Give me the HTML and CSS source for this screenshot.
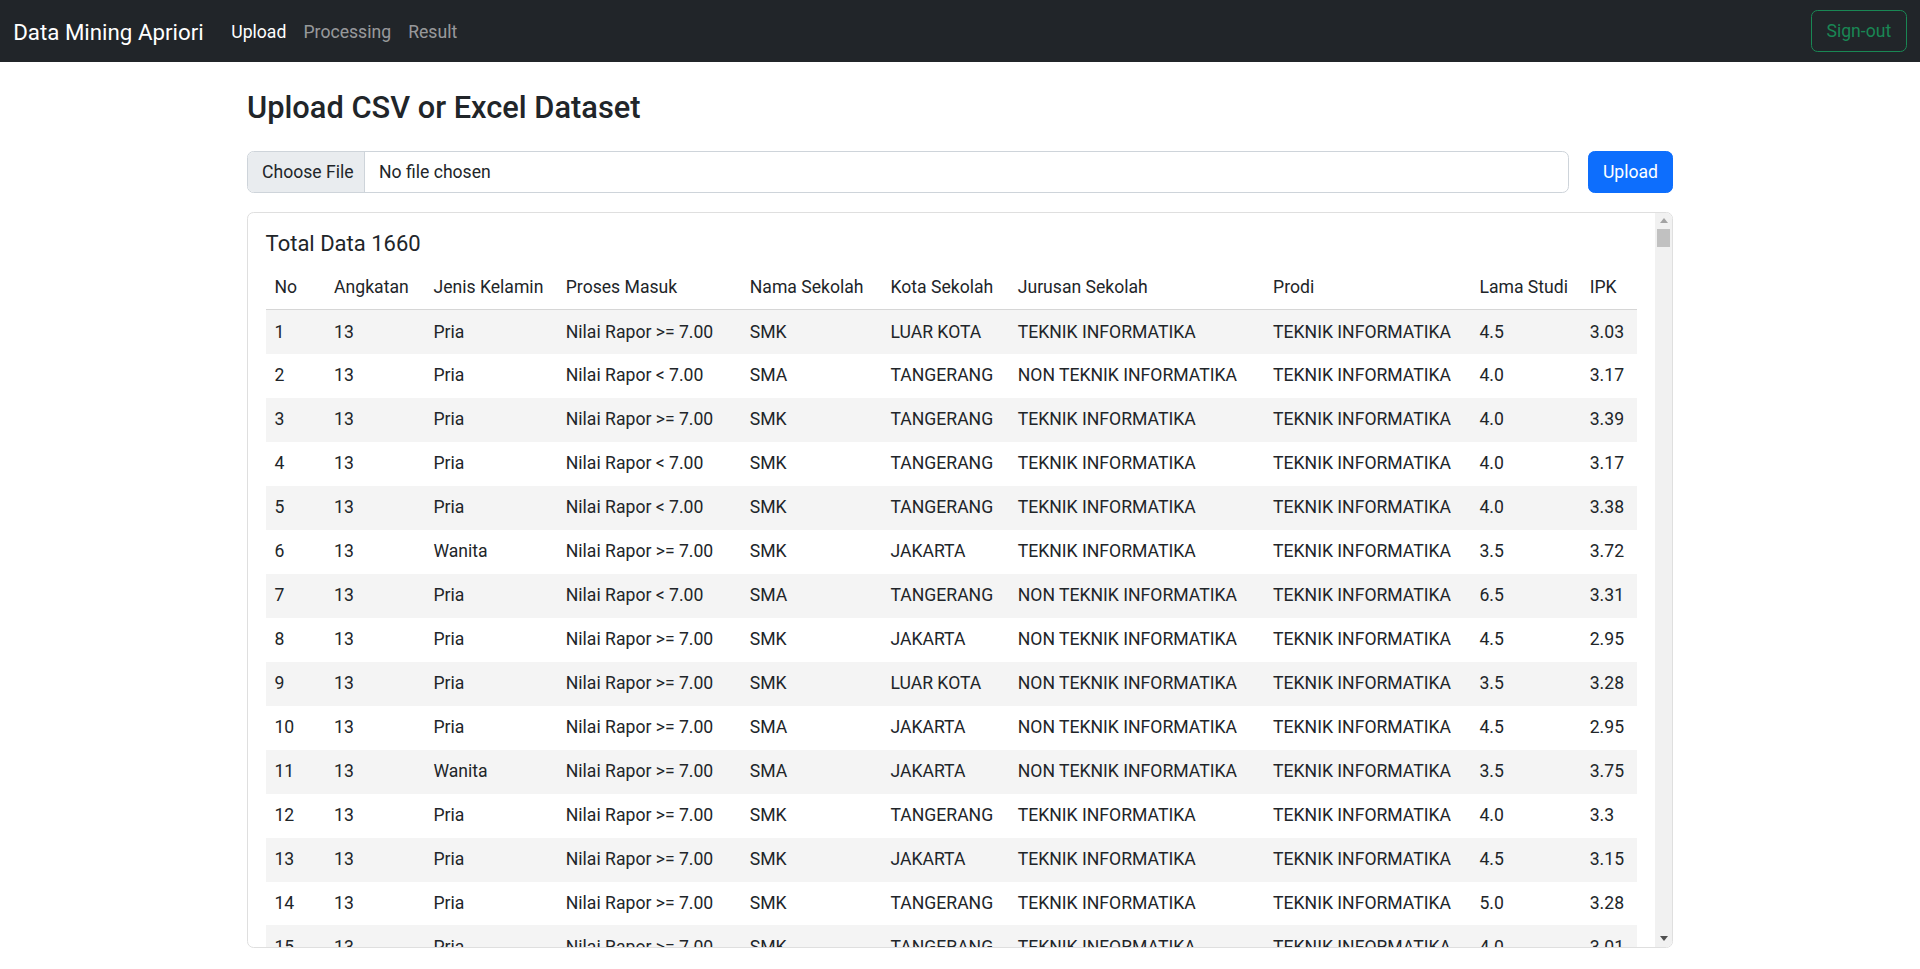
FILE: index.html
```html
<!DOCTYPE html>
<html lang="en">
<head>
<meta charset="utf-8">
<title>Data Mining Apriori</title>
<link rel="stylesheet" href="styles.css">
</head>
<body>
<nav class="navbar">
  <div class="nav-left">
    <a class="brand" href="#">Data Mining Apriori</a>
    <ul class="nav-links">
      <li><a class="nav-link active" href="#">Upload</a></li>
      <li><a class="nav-link" href="#">Processing</a></li>
      <li><a class="nav-link" href="#">Result</a></li>
    </ul>
  </div>
  <button class="btn-signout" type="button">Sign-out</button>
</nav>

<main class="container">
  <h2 class="page-title">Upload CSV or Excel Dataset</h2>
  <form class="upload-form">
    <label class="file-input">
      <input type="file" class="file-hidden" accept=".csv,.xlsx,.xls">
      <span class="file-btn">Choose File</span>
      <span class="file-name">No file chosen</span>
    </label>
    <button class="btn-upload" type="button">Upload</button>
  </form>

  <section class="card">
    <div class="card-scroll">
      <div class="card-body">
        <h5 class="card-title">Total Data 1660</h5>
        <table class="data-table">
          <colgroup>
            <col class="c-no"><col class="c-angkatan"><col class="c-jk"><col class="c-proses"><col class="c-nama">
            <col class="c-kota"><col class="c-jurusan"><col class="c-prodi"><col class="c-lama"><col class="c-ipk">
          </colgroup>
          <thead>
            <tr><th>No</th><th>Angkatan</th><th>Jenis Kelamin</th><th>Proses Masuk</th><th>Nama Sekolah</th><th>Kota Sekolah</th><th>Jurusan Sekolah</th><th>Prodi</th><th>Lama Studi</th><th>IPK</th></tr>
          </thead>
          <tbody>
            <tr><td>1</td><td>13</td><td>Pria</td><td>Nilai Rapor &gt;= 7.00</td><td>SMK</td><td>LUAR KOTA</td><td>TEKNIK INFORMATIKA</td><td>TEKNIK INFORMATIKA</td><td>4.5</td><td>3.03</td></tr>
            <tr><td>2</td><td>13</td><td>Pria</td><td>Nilai Rapor &lt; 7.00</td><td>SMA</td><td>TANGERANG</td><td>NON TEKNIK INFORMATIKA</td><td>TEKNIK INFORMATIKA</td><td>4.0</td><td>3.17</td></tr>
            <tr><td>3</td><td>13</td><td>Pria</td><td>Nilai Rapor &gt;= 7.00</td><td>SMK</td><td>TANGERANG</td><td>TEKNIK INFORMATIKA</td><td>TEKNIK INFORMATIKA</td><td>4.0</td><td>3.39</td></tr>
            <tr><td>4</td><td>13</td><td>Pria</td><td>Nilai Rapor &lt; 7.00</td><td>SMK</td><td>TANGERANG</td><td>TEKNIK INFORMATIKA</td><td>TEKNIK INFORMATIKA</td><td>4.0</td><td>3.17</td></tr>
            <tr><td>5</td><td>13</td><td>Pria</td><td>Nilai Rapor &lt; 7.00</td><td>SMK</td><td>TANGERANG</td><td>TEKNIK INFORMATIKA</td><td>TEKNIK INFORMATIKA</td><td>4.0</td><td>3.38</td></tr>
            <tr><td>6</td><td>13</td><td>Wanita</td><td>Nilai Rapor &gt;= 7.00</td><td>SMK</td><td>JAKARTA</td><td>TEKNIK INFORMATIKA</td><td>TEKNIK INFORMATIKA</td><td>3.5</td><td>3.72</td></tr>
            <tr><td>7</td><td>13</td><td>Pria</td><td>Nilai Rapor &lt; 7.00</td><td>SMA</td><td>TANGERANG</td><td>NON TEKNIK INFORMATIKA</td><td>TEKNIK INFORMATIKA</td><td>6.5</td><td>3.31</td></tr>
            <tr><td>8</td><td>13</td><td>Pria</td><td>Nilai Rapor &gt;= 7.00</td><td>SMK</td><td>JAKARTA</td><td>NON TEKNIK INFORMATIKA</td><td>TEKNIK INFORMATIKA</td><td>4.5</td><td>2.95</td></tr>
            <tr><td>9</td><td>13</td><td>Pria</td><td>Nilai Rapor &gt;= 7.00</td><td>SMK</td><td>LUAR KOTA</td><td>NON TEKNIK INFORMATIKA</td><td>TEKNIK INFORMATIKA</td><td>3.5</td><td>3.28</td></tr>
            <tr><td>10</td><td>13</td><td>Pria</td><td>Nilai Rapor &gt;= 7.00</td><td>SMA</td><td>JAKARTA</td><td>NON TEKNIK INFORMATIKA</td><td>TEKNIK INFORMATIKA</td><td>4.5</td><td>2.95</td></tr>
            <tr><td>11</td><td>13</td><td>Wanita</td><td>Nilai Rapor &gt;= 7.00</td><td>SMA</td><td>JAKARTA</td><td>NON TEKNIK INFORMATIKA</td><td>TEKNIK INFORMATIKA</td><td>3.5</td><td>3.75</td></tr>
            <tr><td>12</td><td>13</td><td>Pria</td><td>Nilai Rapor &gt;= 7.00</td><td>SMK</td><td>TANGERANG</td><td>TEKNIK INFORMATIKA</td><td>TEKNIK INFORMATIKA</td><td>4.0</td><td>3.3</td></tr>
            <tr><td>13</td><td>13</td><td>Pria</td><td>Nilai Rapor &gt;= 7.00</td><td>SMK</td><td>JAKARTA</td><td>TEKNIK INFORMATIKA</td><td>TEKNIK INFORMATIKA</td><td>4.5</td><td>3.15</td></tr>
            <tr><td>14</td><td>13</td><td>Pria</td><td>Nilai Rapor &gt;= 7.00</td><td>SMK</td><td>TANGERANG</td><td>TEKNIK INFORMATIKA</td><td>TEKNIK INFORMATIKA</td><td>5.0</td><td>3.28</td></tr>
            <tr><td>15</td><td>13</td><td>Pria</td><td>Nilai Rapor &gt;= 7.00</td><td>SMK</td><td>TANGERANG</td><td>TEKNIK INFORMATIKA</td><td>TEKNIK INFORMATIKA</td><td>4.0</td><td>3.01</td></tr>
          </tbody>
        </table>
      </div>
    </div>
    <div class="scrollbar" aria-hidden="true">
      <span class="sb-btn"><span class="sb-arrow-up"></span></span>
      <span class="sb-thumb"></span>
      <span class="sb-track"></span>
      <span class="sb-btn"><span class="sb-arrow-down"></span></span>
    </div>
  </section>
</main>
</body>
</html>
```

FILE: styles.css
```css
* { box-sizing: border-box; }

html, body {
  margin: 0;
  padding: 0;
}

body {
  font-family: Roboto, "Noto Sans", "Liberation Sans", sans-serif;
  font-size: 17.6px;
  line-height: 1.5;
  color: #212529;
  background: #fff;
}

/* ---------- navbar ---------- */
.navbar {
  height: 62px;
  background: #212529;
  display: flex;
  align-items: center;
  justify-content: space-between;
  padding: 0 13.2px;
}

.nav-left {
  display: flex;
  align-items: center;
  padding-top: 3px;
}

.brand {
  font-size: 22.3px;
  line-height: 1.5;
  color: #fff;
  text-decoration: none;
  margin-right: 19px;
}

.nav-links {
  list-style: none;
  margin: 0;
  padding: 0;
  display: flex;
}

.nav-link {
  display: block;
  padding: 8.8px 8.6px;
  color: rgba(255, 255, 255, 0.55);
  text-decoration: none;
}

.nav-link.active { color: #fff; }

.btn-signout {
  font-family: inherit;
  font-size: 17.6px;
  line-height: 1.5;
  height: 42px;
  width: 96px;
  padding: 0;
  color: #198754;
  background: transparent;
  border: 1.1px solid #198754;
  border-radius: 6.6px;
}

/* ---------- content ---------- */
.container {
  max-width: 1426px;
  margin: 0 auto;
}

.page-title {
  font-size: 30.8px;
  font-weight: 500;
  line-height: 1.2;
  margin: 27.6px 0 24.4px;
}

.upload-form {
  display: flex;
  gap: 19px;
  margin-bottom: 19px;
}

.file-input {
  flex: 1;
  height: 42px;
  display: flex;
  align-items: stretch;
  border: 1.1px solid #ced4da;
  border-radius: 6.6px;
  overflow: hidden;
  cursor: pointer;
}

.file-hidden { display: none; }

.file-btn {
  flex: none;
  display: flex;
  align-items: center;
  width: 117px;
  padding: 0 0 0 14px;
  white-space: nowrap;
  background: #e9ecef;
  border-right: 1.1px solid #ced4da;
}

.file-name {
  display: flex;
  align-items: center;
  padding: 0 14px;
  white-space: nowrap;
}

.btn-upload {
  font-family: inherit;
  font-size: 17.6px;
  height: 42px;
  width: 85px;
  padding: 0;
  color: #fff;
  background: #0d6efd;
  border: 1.1px solid #0d6efd;
  border-radius: 6.6px;
}

/* ---------- card / table ---------- */
.card {
  height: 736px;
  display: flex;
  border: 1px solid #dfdfdf;
  border-radius: 6.6px;
  overflow: hidden;
}

.card-scroll {
  flex: 1;
  min-width: 0;
  overflow-y: auto;
  scrollbar-width: none;
}

.card-scroll::-webkit-scrollbar { display: none; }

.scrollbar {
  flex: none;
  width: 17px;
  display: flex;
  flex-direction: column;
  background: #f1f1f1;
}

.sb-btn {
  height: 16px;
  display: flex;
  align-items: center;
  justify-content: center;
}

.sb-arrow-up {
  width: 0;
  height: 0;
  border-left: 4.5px solid transparent;
  border-right: 4.5px solid transparent;
  border-bottom: 5px solid #a3a3a3;
}

.sb-arrow-down {
  width: 0;
  height: 0;
  border-left: 4.5px solid transparent;
  border-right: 4.5px solid transparent;
  border-top: 5px solid #505050;
}

.sb-thumb {
  height: 18px;
  margin: 0 2px;
  background: #c1c1c1;
}

.sb-track { flex: 1; }

.card-body {
  padding: 17.6px;
}

.card-title {
  font-size: 22px;
  font-weight: 400;
  line-height: 1.2;
  margin: 0 0 7.8px;
}

.data-table {
  width: 100%;
  table-layout: fixed;
  border-collapse: collapse;
}

.c-no { width: 59.7px; }
.c-angkatan { width: 99.4px; }
.c-jk { width: 132.3px; }
.c-proses { width: 184px; }
.c-nama { width: 140.7px; }
.c-kota { width: 127.3px; }
.c-jurusan { width: 255.3px; }
.c-prodi { width: 206.4px; }
.c-lama { width: 110.3px; }
.c-ipk { width: 56.4px; }

.data-table th,
.data-table td {
  padding: 8.8px;
  text-align: left;
  font-weight: 400;
  white-space: nowrap;
}

.data-table thead th {
  border-bottom: 1px solid #d6d6d6;
}

.data-table tbody tr:nth-child(odd) td {
  background: #f4f4f4;
}
```
